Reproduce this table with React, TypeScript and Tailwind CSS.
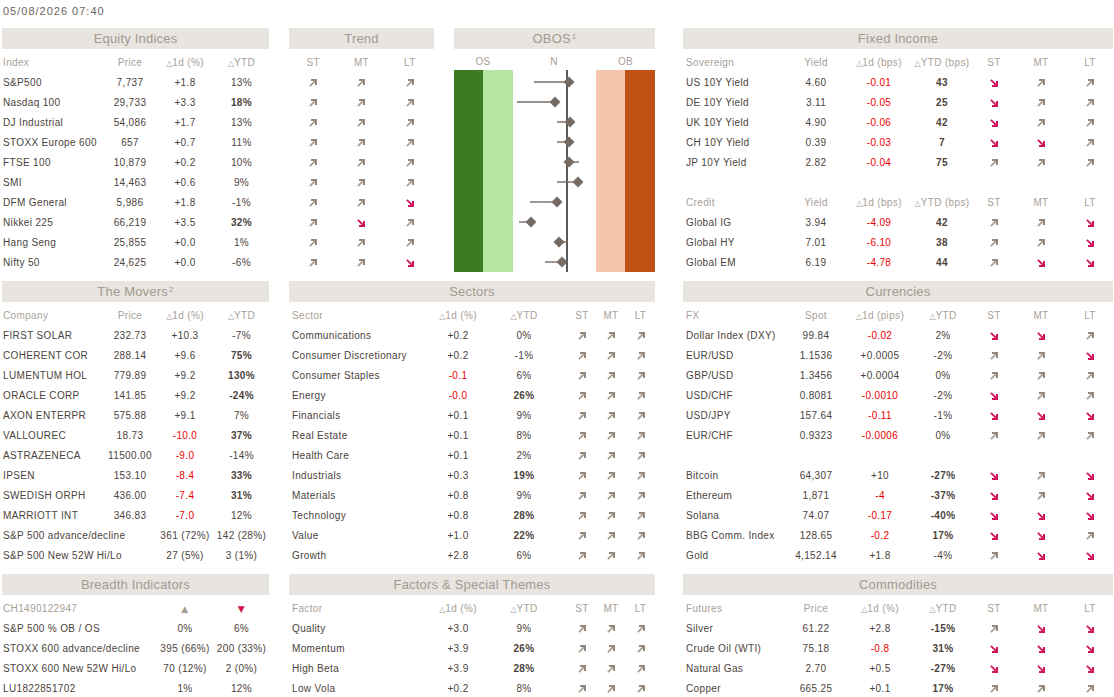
import React from "react";

type D = "u" | "d";

function Arrow({ d }: { d: D }) {
  if (d === "u")
    return (
      <svg width="8" height="8" viewBox="0 0 8 8" className="block">
        <path d="M0.9 7.1L6.2 1.8" stroke="#aa9e92" strokeWidth="1.9" />
        <path d="M2 1H7V6" stroke="#94877b" strokeWidth="2" fill="none" />
      </svg>
    );
  return (
    <svg width="8" height="8" viewBox="0 0 8 8" className="block">
      <path d="M0.9 0.9L6.2 6.2" stroke="#d3155b" strokeWidth="1.9" />
      <path d="M7 2V7H2" stroke="#d3155b" strokeWidth="2" fill="none" />
    </svg>
  );
}

function Band({ title, sup }: { title: string; sup?: string }) {
  return (
    <div className="h-[21px] bg-[#e8e4df] flex items-center justify-center text-[13px] tracking-[0.2px] text-[#a39a91] leading-none">
      <span>
        {title}
        {sup && <sup className="text-[8px] ml-[1px]">{sup}</sup>}
      </span>
    </div>
  );
}

const HEAD = "text-[10px] text-[#a8a097]";
const RED = "text-[#f00000]";

function Tri({ children }: { children: React.ReactNode }) {
  return (
    <>
      <span className="text-[8px] font-['DejaVu_Sans',sans-serif] tracking-normal">△</span>
      {children}
    </>
  );
}

function d1c(v: string) {
  return v.startsWith("-") ? RED : "";
}
function ytdc(v: string) {
  const n = Math.abs(parseFloat(v.replace(/[^0-9.\-]/g, "")));
  return n >= 15 ? "font-bold" : "";
}

function ArrowCell({ d }: { d: D }) {
  return (
    <div className="flex justify-center">
      <Arrow d={d} />
    </div>
  );
}

/* ---------------- Data ---------------- */

const equity = [
  ["S&P500", "7,737", "+1.8", "13%"],
  ["Nasdaq 100", "29,733", "+3.3", "18%"],
  ["DJ Industrial", "54,086", "+1.7", "13%"],
  ["STOXX Europe 600", "657", "+0.7", "11%"],
  ["FTSE 100", "10,879", "+0.2", "10%"],
  ["SMI", "14,463", "+0.6", "9%"],
  ["DFM General", "5,986", "+1.8", "-1%"],
  ["Nikkei 225", "66,219", "+3.5", "32%"],
  ["Hang Seng", "25,855", "+0.0", "1%"],
  ["Nifty 50", "24,625", "+0.0", "-6%"],
];
const equityTrend: D[][] = [
  ["u", "u", "u"],
  ["u", "u", "u"],
  ["u", "u", "u"],
  ["u", "u", "u"],
  ["u", "u", "u"],
  ["u", "u", "u"],
  ["u", "u", "d"],
  ["u", "d", "u"],
  ["u", "u", "u"],
  ["u", "u", "d"],
];

// [diamond x, line end x] in svg coordinates
const obos: [number, number][] = [
  [115, 80],
  [101, 63],
  [116, 103],
  [115, 103],
  [115, 125],
  [124, 103],
  [103, 76],
  [77, 65],
  [105, 114],
  [108, 91],
];

type Row7 = [string, string, string, string, D, D, D];

const sovereign: Row7[] = [
  ["US 10Y Yield", "4.60", "-0.01", "43", "d", "u", "u"],
  ["DE 10Y Yield", "3.11", "-0.05", "25", "d", "u", "u"],
  ["UK 10Y Yield", "4.90", "-0.06", "42", "d", "u", "u"],
  ["CH 10Y Yield", "0.39", "-0.03", "7", "d", "d", "u"],
  ["JP 10Y Yield", "2.82", "-0.04", "75", "u", "u", "u"],
];
const credit: Row7[] = [
  ["Global IG", "3.94", "-4.09", "42", "u", "u", "d"],
  ["Global HY", "7.01", "-6.10", "38", "u", "u", "d"],
  ["Global EM", "6.19", "-4.78", "44", "u", "d", "d"],
];

const movers = [
  ["FIRST SOLAR", "232.73", "+10.3", "-7%"],
  ["COHERENT COR", "288.14", "+9.6", "75%"],
  ["LUMENTUM HOL", "779.89", "+9.2", "130%"],
  ["ORACLE CORP", "141.85", "+9.2", "-24%"],
  ["AXON ENTERPR", "575.88", "+9.1", "7%"],
  ["VALLOUREC", "18.73", "-10.0", "37%"],
  ["ASTRAZENECA", "11500.00", "-9.0", "-14%"],
  ["IPSEN", "153.10", "-8.4", "33%"],
  ["SWEDISH ORPH", "436.00", "-7.4", "31%"],
  ["MARRIOTT INT", "346.83", "-7.0", "12%"],
];

const sectors = [
  ["Communications", "+0.2", "0%"],
  ["Consumer Discretionary", "+0.2", "-1%"],
  ["Consumer Staples", "-0.1", "6%"],
  ["Energy", "-0.0", "26%"],
  ["Financials", "+0.1", "9%"],
  ["Real Estate", "+0.1", "8%"],
  ["Health Care", "+0.1", "2%"],
  ["Industrials", "+0.3", "19%"],
  ["Materials", "+0.8", "9%"],
  ["Technology", "+0.8", "28%"],
  ["Value", "+1.0", "22%"],
  ["Growth", "+2.8", "6%"],
];

const factors = [
  ["Quality", "+3.0", "9%"],
  ["Momentum", "+3.9", "26%"],
  ["High Beta", "+3.9", "28%"],
  ["Low Vola", "+0.2", "8%"],
];

const fx: Row7[] = [
  ["Dollar Index (DXY)", "99.84", "-0.02", "2%", "d", "d", "u"],
  ["EUR/USD", "1.1536", "+0.0005", "-2%", "u", "u", "d"],
  ["GBP/USD", "1.3456", "+0.0004", "0%", "u", "u", "u"],
  ["USD/CHF", "0.8081", "-0.0010", "-2%", "d", "u", "u"],
  ["USD/JPY", "157.64", "-0.11", "-1%", "d", "d", "d"],
  ["EUR/CHF", "0.9323", "-0.0006", "0%", "u", "u", "u"],
];
const crypto: Row7[] = [
  ["Bitcoin", "64,307", "+10", "-27%", "d", "u", "d"],
  ["Ethereum", "1,871", "-4", "-37%", "d", "u", "d"],
  ["Solana", "74.07", "-0.17", "-40%", "d", "d", "d"],
  ["BBG Comm. Index", "128.65", "-0.2", "17%", "d", "d", "u"],
  ["Gold", "4,152.14", "+1.8", "-4%", "u", "d", "d"],
];
const commodities: Row7[] = [
  ["Silver", "61.22", "+2.8", "-15%", "u", "d", "d"],
  ["Crude Oil (WTI)", "75.18", "-0.8", "31%", "d", "d", "d"],
  ["Natural Gas", "2.70", "+0.5", "-27%", "d", "d", "d"],
  ["Copper", "665.25", "+0.1", "17%", "u", "u", "u"],
];

/* ---------------- Sections ---------------- */

const GRID_BODY =
  "mt-[4px] grid auto-rows-[20px] items-center text-[10px] tracking-[0.35px] text-[#4b433c] leading-none";

function EquityIndices() {
  return (
    <div className="w-[267px] shrink-0">
      <Band title="Equity Indices" />
      <div className={`${GRID_BODY} grid-cols-[98px_60px_50px_59px]`}>
        <div className={`${HEAD} pl-[1px]`}>Index</div>
        <div className={`${HEAD} text-center`}>Price</div>
        <div className={`${HEAD} text-center`}>
          <Tri>1d (%)</Tri>
        </div>
        <div className={`${HEAD} text-center pl-1`}>
          <Tri>YTD</Tri>
        </div>
        {equity.map((r) => (
          <React.Fragment key={r[0]}>
            <div className="pl-[1px] whitespace-nowrap">{r[0]}</div>
            <div className="text-center">{r[1]}</div>
            <div className={`text-center ${d1c(r[2])}`}>{r[2]}</div>
            <div className={`text-center pl-1 ${ytdc(r[3])}`}>{r[3]}</div>
          </React.Fragment>
        ))}
      </div>
    </div>
  );
}

function Trend() {
  return (
    <div className="w-[145px] shrink-0 ml-[20px]">
      <Band title="Trend" />
      <div className={`${GRID_BODY} grid-cols-3`}>
        <div className={`${HEAD} text-center`}>ST</div>
        <div className={`${HEAD} text-center`}>MT</div>
        <div className={`${HEAD} text-center`}>LT</div>
        {equityTrend.map((r, i) => (
          <React.Fragment key={i}>
            <ArrowCell d={r[0]} />
            <ArrowCell d={r[1]} />
            <ArrowCell d={r[2]} />
          </React.Fragment>
        ))}
      </div>
    </div>
  );
}

function Obos() {
  return (
    <div className="w-[201px] shrink-0 ml-[20px]">
      <Band title="OBOS" sup="1" />
      <div className={`mt-[4px] h-[17px] flex items-center ${HEAD} tracking-[0.3px] leading-none`}>
        <div className="w-[58px] text-center">OS</div>
        <div className="w-[84px] text-center">N</div>
        <div className="w-[59px] text-center">OB</div>
      </div>
      <svg width="201" height="202" viewBox="0 0 201 202" className="block">
        <rect x="0" y="0" width="29" height="202" fill="#3c7b22" />
        <rect x="29" y="0" width="30" height="202" fill="#b6e6a3" />
        <rect x="142" y="0" width="29" height="202" fill="#f5c6aa" />
        <rect x="171" y="0" width="30" height="202" fill="#bf5114" />
        <line x1="113" y1="0" x2="113" y2="202" stroke="#000" strokeWidth="1.3" />
        {obos.map(([dx, lx], i) => {
          const y = 12 + i * 20;
          return (
            <g key={i}>
              <line x1={lx} y1={y} x2={dx} y2={y} stroke="#766b63" strokeWidth="1.4" />
              <polygon
                points={`${dx},${y - 5.5} ${dx + 5.5},${y} ${dx},${y + 5.5} ${dx - 5.5},${y}`}
                fill="#766b63"
              />
            </g>
          );
        })}
      </svg>
    </div>
  );
}

function Rows7({ rows, boldYtd }: { rows: Row7[]; boldYtd?: boolean }) {
  return (
    <>
      {rows.map((r) => (
        <React.Fragment key={r[0]}>
          <div className="pl-[3px] whitespace-nowrap">{r[0]}</div>
          <div className="text-center">{r[1]}</div>
          <div className={`text-center ${d1c(r[2])}`}>{r[2]}</div>
          <div className={`text-center ${boldYtd ? "font-bold" : ytdc(r[3])}`}>{r[3]}</div>
          <ArrowCell d={r[4]} />
          <ArrowCell d={r[5]} />
          <ArrowCell d={r[6]} />
        </React.Fragment>
      ))}
    </>
  );
}

function Head7({ a, b, c, d }: { a: string; b: string; c: string; d: string }) {
  return (
    <>
      <div className={`${HEAD} pl-[3px]`}>{a}</div>
      <div className={`${HEAD} text-center`}>{b}</div>
      <div className={`${HEAD} text-center whitespace-nowrap`}>
        <Tri>{c}</Tri>
      </div>
      <div className={`${HEAD} text-center whitespace-nowrap`}>
        <Tri>{d}</Tri>
      </div>
      <div className={`${HEAD} text-center`}>ST</div>
      <div className={`${HEAD} text-center`}>MT</div>
      <div className={`${HEAD} text-center`}>LT</div>
    </>
  );
}

function FixedIncome() {
  return (
    <div className="w-[430px] shrink-0 ml-[28px]">
      <Band title="Fixed Income" />
      <div className={`${GRID_BODY} grid-cols-[102px_62px_64px_62px_42px_52px_46px]`}>
        <Head7 a="Sovereign" b="Yield" c="1d (bps)" d="YTD (bps)" />
        <Rows7 rows={sovereign} boldYtd />
        <div className="col-span-7" />
        <Head7 a="Credit" b="Yield" c="1d (bps)" d="YTD (bps)" />
        <Rows7 rows={credit} boldYtd />
      </div>
    </div>
  );
}

function Movers() {
  return (
    <div className="w-[267px] shrink-0">
      <Band title="The Movers" sup="2" />
      <div className={`${GRID_BODY} grid-cols-[98px_60px_50px_59px]`}>
        <div className={`${HEAD} pl-[1px]`}>Company</div>
        <div className={`${HEAD} text-center`}>Price</div>
        <div className={`${HEAD} text-center`}>
          <Tri>1d (%)</Tri>
        </div>
        <div className={`${HEAD} text-center pl-1`}>
          <Tri>YTD</Tri>
        </div>
        {movers.map((r) => (
          <React.Fragment key={r[0]}>
            <div className="pl-[1px] whitespace-nowrap">{r[0]}</div>
            <div className="text-center">{r[1]}</div>
            <div className={`text-center ${d1c(r[2])}`}>{r[2]}</div>
            <div className={`text-center pl-1 ${ytdc(r[3])}`}>{r[3]}</div>
          </React.Fragment>
        ))}
        <div className="col-span-2 pl-[1px] whitespace-nowrap">S&amp;P 500 advance/decline</div>
        <div className="text-center whitespace-nowrap">361 (72%)</div>
        <div className="text-center pl-1 whitespace-nowrap">142 (28%)</div>
        <div className="col-span-2 pl-[1px] whitespace-nowrap">S&amp;P 500 New 52W Hi/Lo</div>
        <div className="text-center whitespace-nowrap">27 (5%)</div>
        <div className="text-center pl-1 whitespace-nowrap">3 (1%)</div>
      </div>
    </div>
  );
}

function SectorTable({ title, label, rows }: { title: string; label: string; rows: string[][] }) {
  return (
    <div className="w-[366px] shrink-0 ml-[20px]">
      <Band title={title} />
      <div className={`${GRID_BODY} grid-cols-[135px_68px_64px_12px_28px_30px_29px]`}>
        <div className={`${HEAD} pl-[3px]`}>{label}</div>
        <div className={`${HEAD} text-center`}>
          <Tri>1d (%)</Tri>
        </div>
        <div className={`${HEAD} text-center`}>
          <Tri>YTD</Tri>
        </div>
        <div />
        <div className={`${HEAD} text-center`}>ST</div>
        <div className={`${HEAD} text-center`}>MT</div>
        <div className={`${HEAD} text-center`}>LT</div>
        {rows.map((r) => (
          <React.Fragment key={r[0]}>
            <div className="pl-[3px] whitespace-nowrap">{r[0]}</div>
            <div className={`text-center ${d1c(r[1])}`}>{r[1]}</div>
            <div className={`text-center ${ytdc(r[2])}`}>{r[2]}</div>
            <div />
            <ArrowCell d="u" />
            <ArrowCell d="u" />
            <ArrowCell d="u" />
          </React.Fragment>
        ))}
      </div>
    </div>
  );
}

function Currencies() {
  return (
    <div className="w-[430px] shrink-0 ml-[28px]">
      <Band title="Currencies" />
      <div className={`${GRID_BODY} grid-cols-[102px_62px_66px_60px_42px_52px_46px]`}>
        <Head7 a="FX" b="Spot" c="1d (pips)" d="YTD" />
        <Rows7 rows={fx} />
        <div className="col-span-7" />
        <Rows7 rows={crypto} />
      </div>
    </div>
  );
}

function Commodities() {
  return (
    <div className="w-[430px] shrink-0 ml-[28px]">
      <Band title="Commodities" />
      <div className={`${GRID_BODY} grid-cols-[102px_62px_66px_60px_42px_52px_46px]`}>
        <Head7 a="Futures" b="Price" c="1d (%)" d="YTD" />
        <Rows7 rows={commodities} />
      </div>
    </div>
  );
}

function Breadth() {
  const rows = [
    ["S&P 500 % OB / OS", "0%", "6%"],
    ["STOXX 600 advance/decline", "395 (66%)", "200 (33%)"],
    ["STOXX 600 New 52W Hi/Lo", "70 (12%)", "2 (0%)"],
    ["LU1822851702", "1%", "12%"],
  ];
  return (
    <div className="w-[267px] shrink-0">
      <Band title="Breadth Indicators" />
      <div className={`${GRID_BODY} grid-cols-[98px_60px_50px_59px]`}>
        <div className={`${HEAD} pl-[1px] col-span-2`}>CH1490122947</div>
        <div className="text-center text-[9px] text-[#a59c94] font-['DejaVu_Sans',sans-serif]">▲</div>
        <div className="text-center pl-1 text-[9px] text-[#cf1150] font-['DejaVu_Sans',sans-serif]">▼</div>
        {rows.map((r) => (
          <React.Fragment key={r[0]}>
            <div className="col-span-2 pl-[1px] whitespace-nowrap">{r[0]}</div>
            <div className="text-center whitespace-nowrap">{r[1]}</div>
            <div className="text-center pl-1 whitespace-nowrap">{r[2]}</div>
          </React.Fragment>
        ))}
      </div>
    </div>
  );
}

export default function App() {
  return (
    <div className="w-[1114px] min-h-[697px] bg-white pl-[2px] font-['Liberation_Sans',Arial,sans-serif]">
      <div className="h-[28px] pt-[4px] pl-[1px] text-[11px] leading-[14px] tracking-[1px] text-[#6d655e]">
        05/08/2026 07:40
      </div>
      <div className="flex">
        <EquityIndices />
        <Trend />
        <Obos />
        <FixedIncome />
      </div>
      <div className="flex mt-[8px]">
        <Movers />
        <SectorTable title="Sectors" label="Sector" rows={sectors} />
        <Currencies />
      </div>
      <div className="flex mt-[8px]">
        <Breadth />
        <SectorTable title="Factors & Special Themes" label="Factor" rows={factors} />
        <Commodities />
      </div>
    </div>
  );
}
